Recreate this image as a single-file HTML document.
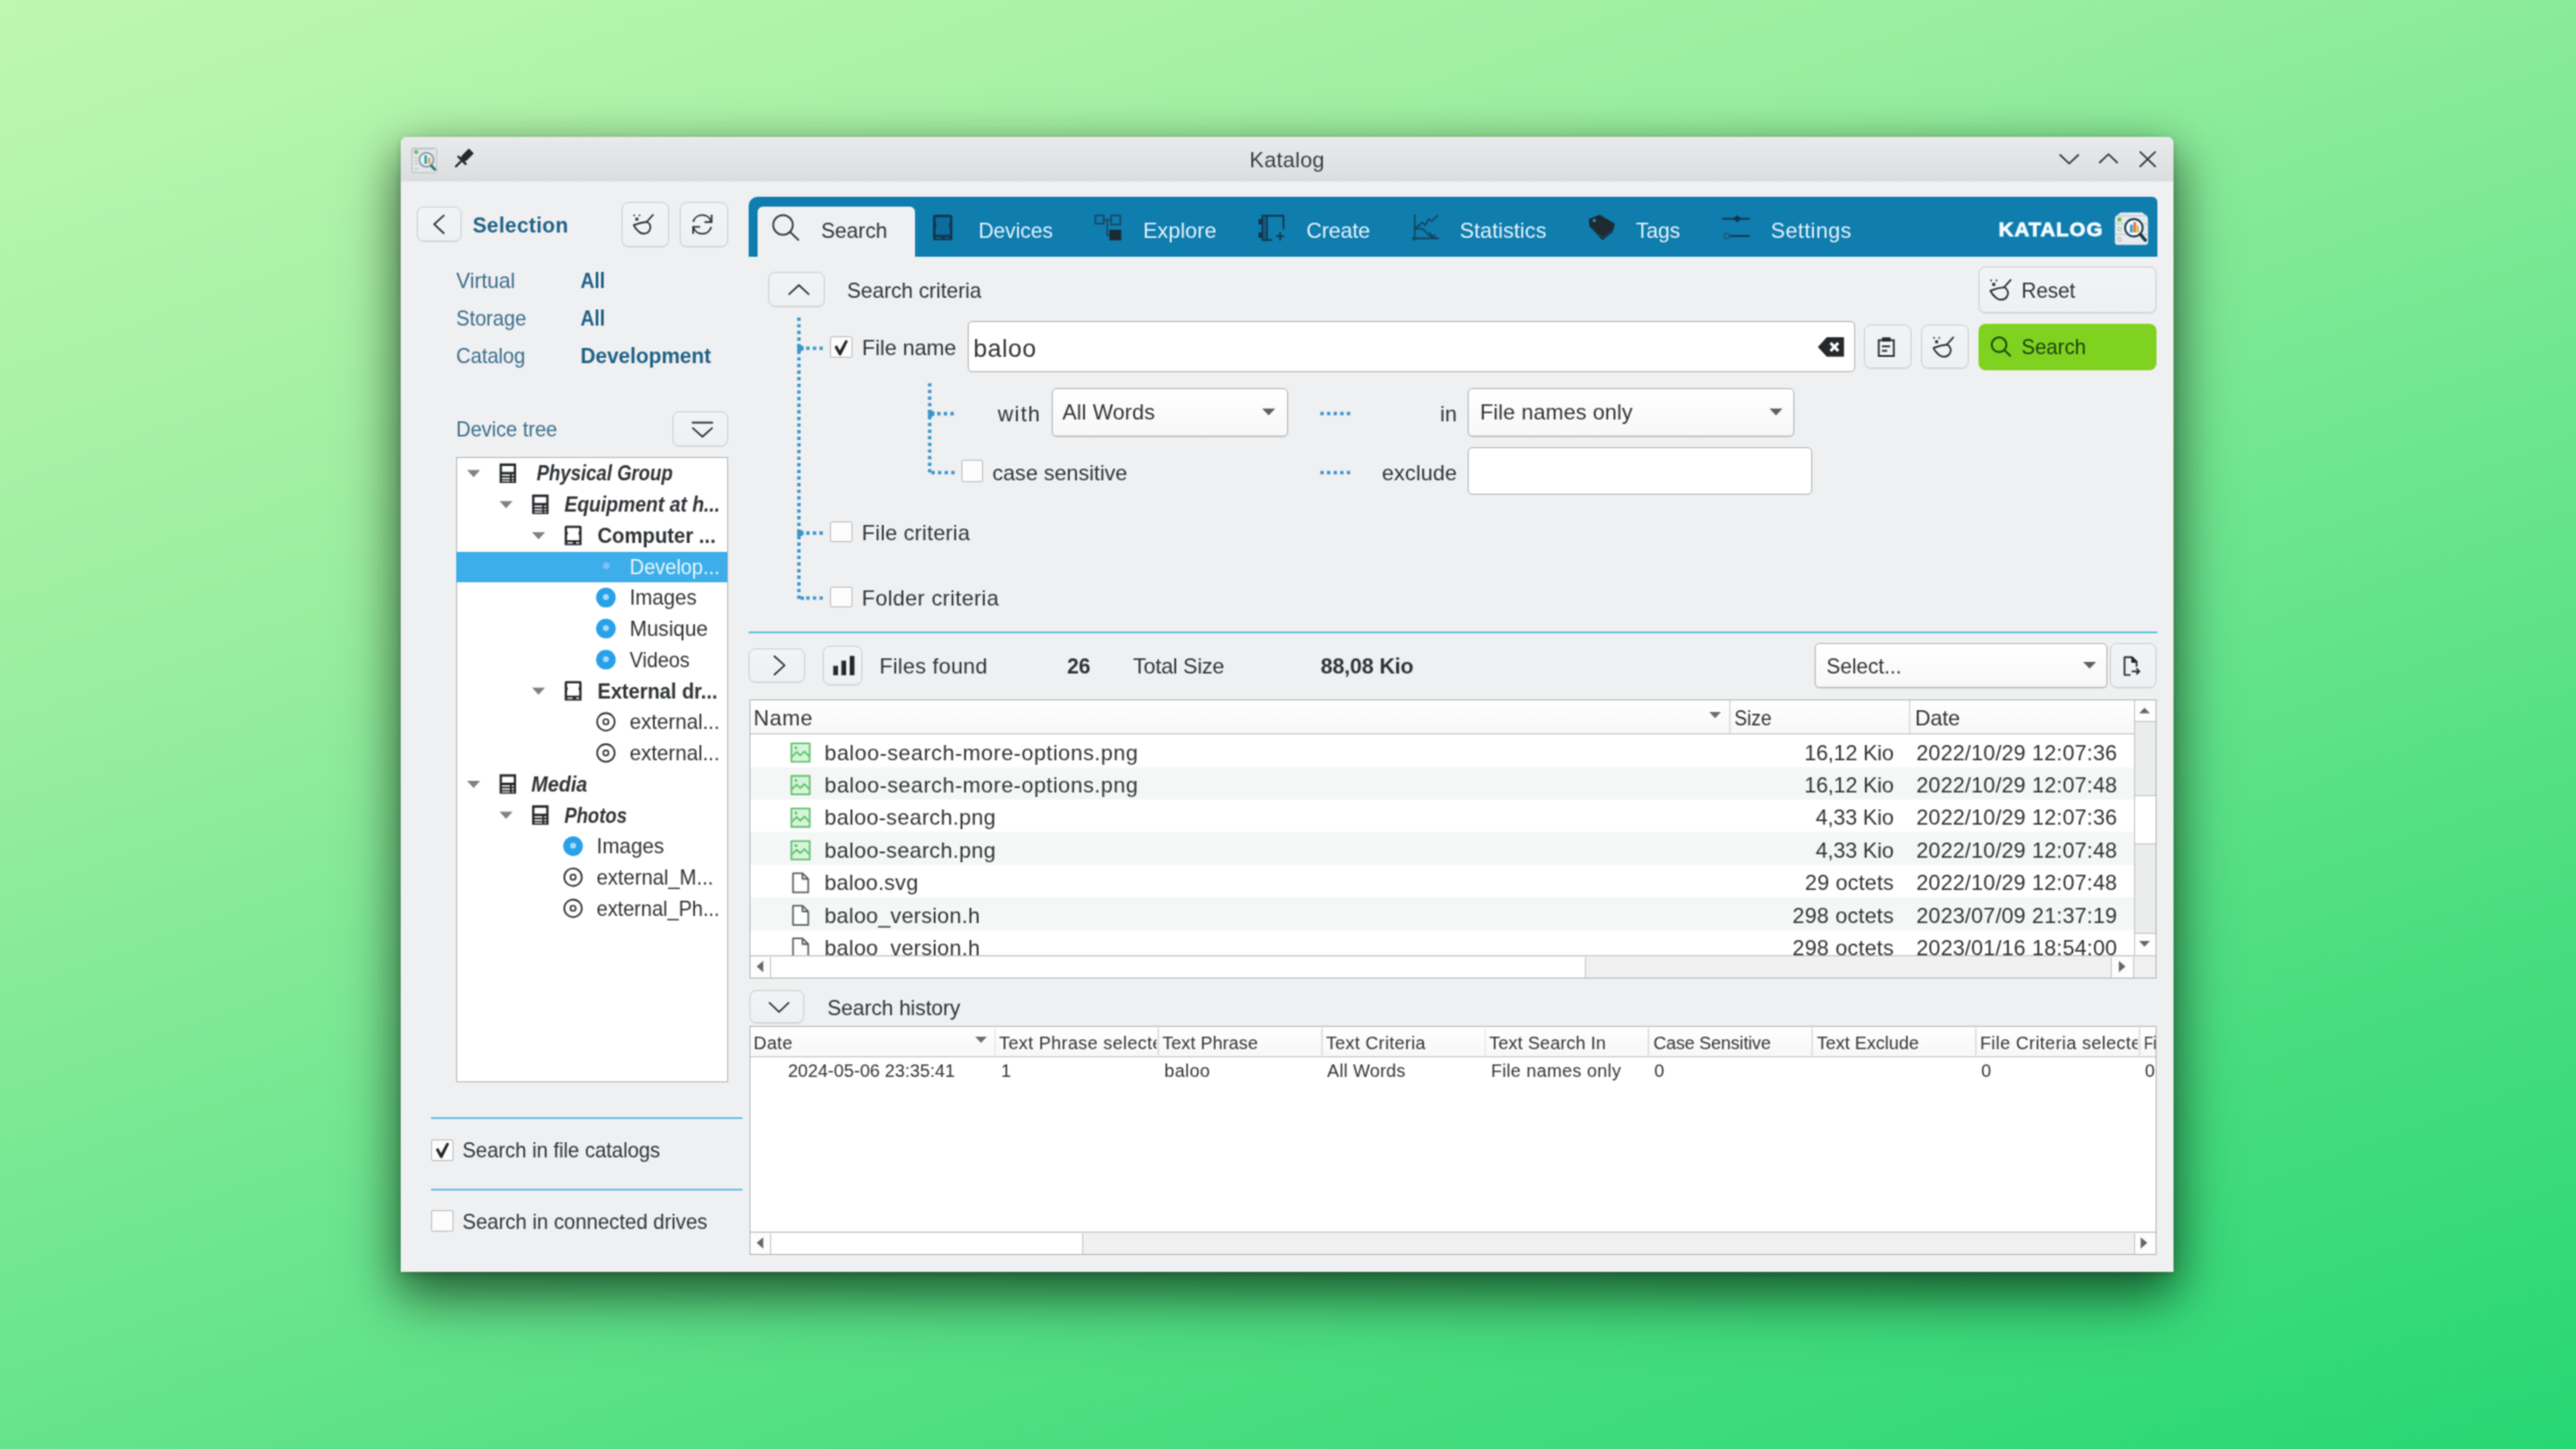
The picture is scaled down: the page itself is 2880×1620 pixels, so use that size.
<!DOCTYPE html>
<html><head><meta charset="utf-8"><title>Katalog</title><style>
html,body{margin:0;padding:0;}
body{width:2880px;height:1620px;overflow:hidden;position:relative;font-family:"Liberation Sans", sans-serif;
background:#74e793;}
.a{position:absolute;box-sizing:border-box;}
.t{position:absolute;white-space:nowrap;line-height:30px;height:30px;}
.btn{border:1.6px solid #c8cacc;border-radius:7.5px;background:linear-gradient(#f2f3f4,#eff0f1);box-shadow:0 1px 1.5px rgba(0,0,0,.06);}
.edit{border:1.7px solid #a9abad;border-radius:5px;background:#fff;}
.combo{border:1.7px solid #acaeb0;border-radius:5px;background:linear-gradient(#ffffff,#f7f7f8);box-shadow:0 1px 1.5px rgba(0,0,0,.10);}
.cb{border:1.6px solid #b4b6b8;border-radius:2px;background:#fcfcfc;}
</style></head><body>
<div class="a" style="left:0;top:0;width:2880px;height:1620px;background:linear-gradient(160deg,#bff7b1 0%,#9aee9f 30%,#6fe690 55%,#45dc7e 80%,#27d773 100%);"></div><svg width="0" height="0" style="position:absolute;left:0;top:0"><filter id="soft" x="0" y="0" width="100%" height="100%" color-interpolation-filters="sRGB"><feConvolveMatrix order="3" kernelMatrix="0.05090 0.12381 0.05090 0.12381 0.30116 0.12381 0.05090 0.12381 0.05090" edgeMode="duplicate" preserveAlpha="false"/></filter></svg><div class="a" style="left:0;top:0;width:2880px;height:1620px;filter:url(#soft);"><div class="a " style="left:448.0px;top:153.0px;width:1982.0px;height:1268.6px;background:#eff0f1;border-radius:7px 7px 0 0;box-shadow:0 20px 48px 2px rgba(0,24,8,.52),0 30px 80px 0 rgba(0,24,8,.30),0 3px 10px rgba(0,20,8,.18);"></div><div class="a " style="left:448.0px;top:153.0px;width:1982.0px;height:50.0px;background:linear-gradient(#e9eaeb,#dcddde);border-radius:7px 7px 0 0;"></div><span id="t0" class="t" style="font-size:24px;color:#3a3d40;top:164.28px;letter-spacing:0.366px;left:1397.10px;">Katalog</span><div class="a btn" style="left:465.9px;top:231.4px;width:50.0px;height:38.4px;"></div><span id="t1" class="t" style="font-size:23.3px;color:#1f6186;top:237.27px;font-weight:bold;letter-spacing:0.403px;left:528.40px;">Selection</span><div class="a btn" style="left:694.9px;top:225.7px;width:52.8px;height:50.0px;"></div><div class="a btn" style="left:760.1px;top:225.7px;width:53.6px;height:50.0px;"></div><span id="t2" class="t" style="font-size:24px;color:#3b6e8c;top:298.58px;left:509.80px;transform:scaleX(0.9749);transform-origin:left center;">Virtual</span><span id="t3" class="t" style="font-size:24px;color:#1f6186;top:298.58px;font-weight:bold;left:648.50px;transform:scaleX(0.8966);transform-origin:left center;">All</span><span id="t4" class="t" style="font-size:24px;color:#3b6e8c;top:340.88px;left:509.80px;transform:scaleX(0.9326);transform-origin:left center;">Storage</span><span id="t5" class="t" style="font-size:24px;color:#1f6186;top:340.88px;font-weight:bold;left:648.50px;transform:scaleX(0.8966);transform-origin:left center;">All</span><span id="t6" class="t" style="font-size:24px;color:#3b6e8c;top:383.28px;left:509.80px;transform:scaleX(0.9343);transform-origin:left center;">Catalog</span><span id="t7" class="t" style="font-size:24px;color:#1f6186;top:383.28px;font-weight:bold;left:648.80px;transform:scaleX(0.9681);transform-origin:left center;">Development</span><span id="t8" class="t" style="font-size:24px;color:#3b6e8c;top:465.28px;left:509.80px;transform:scaleX(0.9309);transform-origin:left center;">Device tree</span><div class="a btn" style="left:752.2px;top:460.4px;width:61.8px;height:38.2px;"></div><div class="a " style="left:509.5px;top:510.6px;width:304.1px;height:699.3px;background:#fff;border:1.6px solid #adafb1;"></div><div class="a " style="left:510.3px;top:616.6px;width:302.5px;height:34.2px;background:#3daee9;"></div><span id="t9" class="t" style="font-size:24px;color:#303336;top:514.38px;font-weight:bold;font-style:italic;left:599.60px;transform:scaleX(0.8639);transform-origin:left center;">Physical Group</span><span id="t10" class="t" style="font-size:24px;color:#303336;top:549.12px;font-weight:bold;font-style:italic;left:630.90px;transform:scaleX(0.9005);transform-origin:left center;">Equipment at h...</span><span id="t11" class="t" style="font-size:24px;color:#303336;top:583.86px;font-weight:bold;left:667.80px;transform:scaleX(0.9442);transform-origin:left center;">Computer ...</span><span id="t12" class="t" style="font-size:24px;color:#e9f7fe;top:618.60px;left:703.60px;transform:scaleX(0.9309);transform-origin:left center;">Develop...</span><span id="t13" class="t" style="font-size:24px;color:#303336;top:653.34px;left:703.60px;transform:scaleX(0.9517);transform-origin:left center;">Images</span><span id="t14" class="t" style="font-size:24px;color:#303336;top:688.08px;left:703.60px;transform:scaleX(0.9634);transform-origin:left center;">Musique</span><span id="t15" class="t" style="font-size:24px;color:#303336;top:722.82px;left:703.60px;transform:scaleX(0.9198);transform-origin:left center;">Videos</span><span id="t16" class="t" style="font-size:24px;color:#303336;top:757.56px;font-weight:bold;left:667.80px;transform:scaleX(0.9315);transform-origin:left center;">External dr...</span><span id="t17" class="t" style="font-size:24px;color:#303336;top:792.30px;left:703.60px;transform:scaleX(0.9545);transform-origin:left center;">external...</span><span id="t18" class="t" style="font-size:24px;color:#303336;top:827.04px;left:703.60px;transform:scaleX(0.9545);transform-origin:left center;">external...</span><span id="t19" class="t" style="font-size:24px;color:#303336;top:861.78px;font-weight:bold;font-style:italic;left:594.00px;transform:scaleX(0.9204);transform-origin:left center;">Media</span><span id="t20" class="t" style="font-size:24px;color:#303336;top:896.52px;font-weight:bold;font-style:italic;left:630.90px;transform:scaleX(0.8595);transform-origin:left center;">Photos</span><span id="t21" class="t" style="font-size:24px;color:#303336;top:931.26px;left:666.70px;transform:scaleX(0.9593);transform-origin:left center;">Images</span><span id="t22" class="t" style="font-size:24px;color:#303336;top:966.00px;left:666.70px;transform:scaleX(0.9406);transform-origin:left center;">external_M...</span><span id="t23" class="t" style="font-size:24px;color:#303336;top:1000.74px;left:666.70px;transform:scaleX(0.9285);transform-origin:left center;">external_Ph...</span><div class="a " style="left:481.7px;top:1248.8px;width:348.8px;height:1.8px;background:#5fbde3;"></div><div class="a cb" style="left:482.3px;top:1273.6px;width:24.4px;height:24.0px;"></div><span id="t24" class="t" style="font-size:24px;color:#303336;top:1270.78px;left:517.20px;transform:scaleX(0.9417);transform-origin:left center;">Search in file catalogs</span><div class="a " style="left:481.7px;top:1328.8px;width:348.8px;height:1.8px;background:#5fbde3;"></div><div class="a cb" style="left:482.3px;top:1353.4px;width:24.4px;height:24.0px;"></div><span id="t25" class="t" style="font-size:24px;color:#303336;top:1350.68px;left:517.20px;transform:scaleX(0.9461);transform-origin:left center;">Search in connected drives</span><div class="a " style="left:836.5px;top:219.5px;width:1575.7px;height:67.5px;background:#0f7dae;border-radius:10px 6px 0 0;"></div><div class="a " style="left:836.5px;top:286.8px;width:1575.7px;height:2.2px;background:#e2f3f9;"></div><div class="a " style="left:847.0px;top:230.5px;width:175.9px;height:58.5px;background:#eff0f1;border-radius:6px 6px 0 0;"></div><span id="t26" class="t" style="font-size:24px;color:#303336;top:242.58px;left:917.70px;transform:scaleX(0.9744);transform-origin:left center;">Search</span><span id="t27" class="t" style="font-size:24px;color:#e4f3fb;top:242.58px;left:1093.80px;transform:scaleX(0.9735);transform-origin:left center;">Devices</span><span id="t28" class="t" style="font-size:24px;color:#e4f3fb;top:242.58px;letter-spacing:0.104px;left:1278.00px;">Explore</span><span id="t29" class="t" style="font-size:24px;color:#e4f3fb;top:242.58px;letter-spacing:-0.149px;left:1460.50px;">Create</span><span id="t30" class="t" style="font-size:24px;color:#e4f3fb;top:242.58px;letter-spacing:0.108px;left:1631.90px;">Statistics</span><span id="t31" class="t" style="font-size:24px;color:#e4f3fb;top:242.58px;left:1829.40px;transform:scaleX(0.9763);transform-origin:left center;">Tags</span><span id="t32" class="t" style="font-size:24px;color:#e4f3fb;top:242.58px;letter-spacing:0.469px;left:1979.80px;">Settings</span><span id="t33" class="t" style="font-size:22.8px;color:#f4fbff;top:241.06px;font-weight:bold;letter-spacing:1.079px;left:2234.60px;-webkit-text-stroke:0.9px #f4fbff;">KATALOG</span><div class="a btn" style="left:859.3px;top:304.2px;width:62.3px;height:39.2px;"></div><span id="t34" class="t" style="font-size:24px;color:#303336;top:310.18px;left:946.80px;transform:scaleX(0.9700);transform-origin:left center;">Search criteria</span><div class="a btn" style="left:2211.8px;top:297.9px;width:199.5px;height:52.3px;"></div><span id="t35" class="t" style="font-size:24px;color:#303336;top:310.28px;left:2259.80px;transform:scaleX(0.9601);transform-origin:left center;">Reset</span><div class="a cb" style="left:928.2px;top:376.0px;width:24.5px;height:24.4px;"></div><span id="t36" class="t" style="font-size:24px;color:#303336;top:374.08px;letter-spacing:0.003px;left:963.80px;">File name</span><div class="a edit" style="left:1081.6px;top:358.6px;width:992.2px;height:57.6px;"></div><span id="t37" class="t" style="font-size:27.5px;color:#303336;top:374.82px;letter-spacing:0.726px;left:1088.20px;">baloo</span><div class="a btn" style="left:2084.3px;top:362.7px;width:53.1px;height:49.8px;"></div><div class="a btn" style="left:2148.0px;top:362.7px;width:53.1px;height:49.8px;"></div><div class="a " style="left:2211.8px;top:361.6px;width:199.5px;height:52.0px;background:#7fd320;border-radius:8px;"></div><span id="t38" class="t" style="font-size:24px;color:#1c3f10;top:373.48px;left:2259.90px;transform:scaleX(0.9494);transform-origin:left center;">Search</span><span id="t39" class="t" style="font-size:24px;color:#303336;top:447.68px;letter-spacing:1.438px;left:1115.60px;">with</span><div class="a combo" style="left:1175.5px;top:434.0px;width:264.0px;height:53.8px;"></div><span id="t40" class="t" style="font-size:24px;color:#303336;top:446.28px;letter-spacing:0.156px;left:1187.70px;">All Words</span><span id="t41" class="t" style="font-size:24px;color:#303336;top:447.68px;letter-spacing:0.113px;left:1610.00px;">in</span><div class="a combo" style="left:1641.4px;top:434.0px;width:364.3px;height:53.8px;"></div><span id="t42" class="t" style="font-size:24px;color:#303336;top:446.28px;letter-spacing:0.166px;left:1654.80px;">File names only</span><div class="a cb" style="left:1074.5px;top:514.4px;width:24.6px;height:24.3px;"></div><span id="t43" class="t" style="font-size:24px;color:#303336;top:513.68px;letter-spacing:0.012px;left:1109.50px;">case sensitive</span><span id="t44" class="t" style="font-size:24px;color:#303336;top:514.28px;letter-spacing:0.178px;left:1545.00px;">exclude</span><div class="a edit" style="left:1641.4px;top:499.9px;width:384.4px;height:53.6px;"></div><div class="a cb" style="left:928.4px;top:582.6px;width:24.2px;height:23.8px;"></div><span id="t45" class="t" style="font-size:24px;color:#303336;top:581.28px;letter-spacing:0.278px;left:963.60px;">File criteria</span><div class="a cb" style="left:928.4px;top:655.6px;width:24.2px;height:23.7px;"></div><span id="t46" class="t" style="font-size:24px;color:#303336;top:653.98px;letter-spacing:0.442px;left:963.60px;">Folder criteria</span><div class="a " style="left:837.0px;top:705.9px;width:1575.2px;height:1.8px;background:#5fbde3;"></div><div class="a btn" style="left:837.3px;top:724.9px;width:62.3px;height:38.4px;"></div><div class="a btn" style="left:919.7px;top:721.7px;width:44.3px;height:44.6px;"></div><span id="t47" class="t" style="font-size:24px;color:#303336;top:729.78px;letter-spacing:0.329px;left:983.20px;">Files found</span><span id="t48" class="t" style="font-size:24px;color:#303336;top:729.78px;font-weight:bold;left:1192.80px;transform:scaleX(0.9812);transform-origin:left center;">26</span><span id="t49" class="t" style="font-size:24px;color:#303336;top:729.78px;letter-spacing:-0.218px;left:1266.80px;">Total Size</span><span id="t50" class="t" style="font-size:24px;color:#303336;top:729.78px;font-weight:bold;letter-spacing:-0.174px;left:1476.50px;">88,08 Kio</span><div class="a combo" style="left:2029.3px;top:719.3px;width:327.0px;height:49.5px;"></div><span id="t51" class="t" style="font-size:24px;color:#303336;top:729.78px;left:2041.80px;transform:scaleX(0.9675);transform-origin:left center;">Select...</span><div class="a btn" style="left:2359.0px;top:719.3px;width:51.8px;height:49.5px;"></div><div class="a " style="left:837.5px;top:781.7px;width:1573.8px;height:312.5px;background:#fff;border:1.6px solid #adafb1;"></div><div class="a " style="left:839.0px;top:857.6px;width:1546.6px;height:36.4px;background:#f5f6f6;"></div><div class="a " style="left:839.0px;top:930.4px;width:1546.6px;height:36.4px;background:#f5f6f6;"></div><div class="a " style="left:839.0px;top:1003.2px;width:1546.6px;height:36.4px;background:#f5f6f6;"></div><div class="a " style="left:839.0px;top:783.2px;width:1546.6px;height:38.0px;background:linear-gradient(#ffffff,#f7f7f8);border-bottom:1.9px solid #b9bbbd;"></div><div class="a " style="left:1933.4px;top:783.2px;width:1.5px;height:36.5px;background:#dfe0e1;"></div><div class="a " style="left:2134.4px;top:783.2px;width:1.5px;height:36.5px;background:#dfe0e1;"></div><span id="t52" class="t" style="font-size:24px;color:#303336;top:788.18px;letter-spacing:0.556px;left:842.60px;">Name</span><span id="t53" class="t" style="font-size:24px;color:#303336;top:788.18px;left:1939.30px;transform:scaleX(0.8910);transform-origin:left center;">Size</span><span id="t54" class="t" style="font-size:24px;color:#303336;top:788.18px;letter-spacing:-0.101px;left:2141.00px;">Date</span><div class="a" style="left:0;top:0;width:2880px;height:1068.2px;overflow:hidden;"><span id="t55" class="t" style="font-size:24px;color:#303336;top:826.58px;letter-spacing:0.603px;left:921.70px;">baloo-search-more-options.png</span><span id="t56" class="t" style="font-size:24px;color:#303336;top:826.58px;letter-spacing:-0.165px;right:762.87px;">16,12 Kio</span><span id="t57" class="t" style="font-size:24px;color:#303336;top:826.58px;letter-spacing:0.232px;left:2142.50px;">2022/10/29 12:07:36</span><span id="t58" class="t" style="font-size:24px;color:#303336;top:862.98px;letter-spacing:0.603px;left:921.70px;">baloo-search-more-options.png</span><span id="t59" class="t" style="font-size:24px;color:#303336;top:862.98px;letter-spacing:-0.165px;right:762.87px;">16,12 Kio</span><span id="t60" class="t" style="font-size:24px;color:#303336;top:862.98px;letter-spacing:0.232px;left:2142.50px;">2022/10/29 12:07:48</span><span id="t61" class="t" style="font-size:24px;color:#303336;top:899.38px;letter-spacing:0.395px;left:921.70px;">baloo-search.png</span><span id="t62" class="t" style="font-size:24px;color:#303336;top:899.38px;letter-spacing:-0.125px;right:762.83px;">4,33 Kio</span><span id="t63" class="t" style="font-size:24px;color:#303336;top:899.38px;letter-spacing:0.232px;left:2142.50px;">2022/10/29 12:07:36</span><span id="t64" class="t" style="font-size:24px;color:#303336;top:935.78px;letter-spacing:0.395px;left:921.70px;">baloo-search.png</span><span id="t65" class="t" style="font-size:24px;color:#303336;top:935.78px;letter-spacing:-0.125px;right:762.83px;">4,33 Kio</span><span id="t66" class="t" style="font-size:24px;color:#303336;top:935.78px;letter-spacing:0.232px;left:2142.50px;">2022/10/29 12:07:48</span><span id="t67" class="t" style="font-size:24px;color:#303336;top:972.18px;letter-spacing:0.256px;left:921.70px;">baloo.svg</span><span id="t68" class="t" style="font-size:24px;color:#303336;top:972.18px;letter-spacing:0.224px;right:762.48px;">29 octets</span><span id="t69" class="t" style="font-size:24px;color:#303336;top:972.18px;letter-spacing:0.232px;left:2142.50px;">2022/10/29 12:07:48</span><span id="t70" class="t" style="font-size:24px;color:#303336;top:1008.58px;letter-spacing:0.310px;left:921.70px;">baloo_version.h</span><span id="t71" class="t" style="font-size:24px;color:#303336;top:1008.58px;letter-spacing:0.272px;right:762.43px;">298 octets</span><span id="t72" class="t" style="font-size:24px;color:#303336;top:1008.58px;letter-spacing:0.232px;left:2142.50px;">2023/07/09 21:37:19</span><span id="t73" class="t" style="font-size:24px;color:#303336;top:1044.98px;letter-spacing:0.310px;left:921.70px;">baloo_version.h</span><span id="t74" class="t" style="font-size:24px;color:#303336;top:1044.98px;letter-spacing:0.272px;right:762.43px;">298 octets</span><span id="t75" class="t" style="font-size:24px;color:#303336;top:1044.98px;letter-spacing:0.232px;left:2142.50px;">2023/01/16 18:54:00</span><svg class="a" style="left:0;top:0;" width="2880" height="1620" viewBox="0 0 2880 1620"><g transform="translate(883.7,830.1)" fill="none" stroke="#5cbf6b" stroke-width="1.8" stroke-linejoin="round"><rect x="1" y="1" width="20.6" height="20.6" fill="#d6f4d9"/><polyline points="1.6,16 7,10.6 11,14.6 15.6,10 21,15.6"/><circle cx="6.2" cy="6" r="1.6" fill="#5cbf6b" stroke="none"/></g><g transform="translate(883.7,866.5)" fill="none" stroke="#5cbf6b" stroke-width="1.8" stroke-linejoin="round"><rect x="1" y="1" width="20.6" height="20.6" fill="#d6f4d9"/><polyline points="1.6,16 7,10.6 11,14.6 15.6,10 21,15.6"/><circle cx="6.2" cy="6" r="1.6" fill="#5cbf6b" stroke="none"/></g><g transform="translate(883.7,902.9)" fill="none" stroke="#5cbf6b" stroke-width="1.8" stroke-linejoin="round"><rect x="1" y="1" width="20.6" height="20.6" fill="#d6f4d9"/><polyline points="1.6,16 7,10.6 11,14.6 15.6,10 21,15.6"/><circle cx="6.2" cy="6" r="1.6" fill="#5cbf6b" stroke="none"/></g><g transform="translate(883.7,939.3)" fill="none" stroke="#5cbf6b" stroke-width="1.8" stroke-linejoin="round"><rect x="1" y="1" width="20.6" height="20.6" fill="#d6f4d9"/><polyline points="1.6,16 7,10.6 11,14.6 15.6,10 21,15.6"/><circle cx="6.2" cy="6" r="1.6" fill="#5cbf6b" stroke="none"/></g><g transform="translate(885.6,975.3)" fill="none" stroke="#55595c" stroke-width="1.8" stroke-linejoin="round"><path d="M1 1 H11.6 L18 7.4 V22.4 H1 Z" fill="#fff"/><path d="M11.6 1 V7.4 H18"/></g><g transform="translate(885.6,1011.7)" fill="none" stroke="#55595c" stroke-width="1.8" stroke-linejoin="round"><path d="M1 1 H11.6 L18 7.4 V22.4 H1 Z" fill="#fff"/><path d="M11.6 1 V7.4 H18"/></g><g transform="translate(885.6,1048.1)" fill="none" stroke="#55595c" stroke-width="1.8" stroke-linejoin="round"><path d="M1 1 H11.6 L18 7.4 V22.4 H1 Z" fill="#fff"/><path d="M11.6 1 V7.4 H18"/></g></svg></div><div class="a " style="left:2385.6px;top:783.2px;width:24.2px;height:285.0px;background:#ebecec;border-left:1.5px solid #bcbec0;"></div><div class="a " style="left:2385.6px;top:783.2px;width:24.2px;height:23.6px;background:#fdfdfd;border-left:1.5px solid #bcbec0;border-bottom:1.5px solid #bcbec0;"></div><div class="a " style="left:2385.6px;top:889.0px;width:24.2px;height:54.8px;background:#ffffff;border:1.5px solid #bcbec0;border-right:none;"></div><div class="a " style="left:2385.6px;top:1042.7px;width:24.2px;height:25.5px;background:#fdfdfd;border-left:1.5px solid #bcbec0;border-top:1.5px solid #bcbec0;"></div><div class="a " style="left:839.0px;top:1068.2px;width:1570.8px;height:24.5px;background:#f0f0f1;border-top:1.6px solid #b7b9bb;"></div><div class="a " style="left:839.0px;top:1069.7px;width:23.1px;height:23.0px;background:#fdfdfd;border-right:1.5px solid #bcbec0;"></div><div class="a " style="left:862.1px;top:1069.7px;width:911.0px;height:23.0px;background:#ffffff;border-right:1.5px solid #bcbec0;"></div><div class="a " style="left:2360.2px;top:1069.7px;width:25.4px;height:23.0px;background:#fdfdfd;border-left:1.5px solid #bcbec0;border-right:1.5px solid #bcbec0;"></div><div class="a btn" style="left:837.8px;top:1106.7px;width:61.5px;height:37.8px;"></div><span id="t76" class="t" style="font-size:24px;color:#303336;top:1112.18px;left:925.00px;transform:scaleX(0.9693);transform-origin:left center;">Search history</span><div class="a " style="left:837.5px;top:1147.3px;width:1573.8px;height:255.9px;background:#fff;border:1.6px solid #adafb1;"></div><div class="a " style="left:839.0px;top:1148.8px;width:1570.8px;height:33.2px;background:linear-gradient(#ffffff,#f7f7f8);border-bottom:1.9px solid #b9bbbd;"></div><div class="a " style="left:1111.7px;top:1148.8px;width:1.5px;height:31.7px;background:#dfe0e1;"></div><div class="a " style="left:1294.4px;top:1148.8px;width:1.5px;height:31.7px;background:#dfe0e1;"></div><div class="a " style="left:1477.0px;top:1148.8px;width:1.5px;height:31.7px;background:#dfe0e1;"></div><div class="a " style="left:1659.6px;top:1148.8px;width:1.5px;height:31.7px;background:#dfe0e1;"></div><div class="a " style="left:1842.4px;top:1148.8px;width:1.5px;height:31.7px;background:#dfe0e1;"></div><div class="a " style="left:2025.4px;top:1148.8px;width:1.5px;height:31.7px;background:#dfe0e1;"></div><div class="a " style="left:2208.2px;top:1148.8px;width:1.5px;height:31.7px;background:#dfe0e1;"></div><div class="a " style="left:2391.2px;top:1148.8px;width:1.5px;height:31.7px;background:#dfe0e1;"></div><span id="t77" class="t" style="font-size:20px;color:#303336;top:1151.33px;letter-spacing:0.350px;left:842.60px;">Date</span><div class="a" style="left:1113.2px;top:0;width:179.8px;height:1620px;overflow:hidden;"><span id="t78" class="t" style="font-size:20px;color:#303336;top:1151.33px;left:3.80px;letter-spacing:0.45px;">Text Phrase selected</span></div><span id="t79" class="t" style="font-size:20px;color:#303336;top:1151.33px;letter-spacing:0.119px;left:1299.50px;">Text Phrase</span><span id="t80" class="t" style="font-size:20px;color:#303336;top:1151.33px;letter-spacing:0.383px;left:1482.40px;">Text Criteria</span><span id="t81" class="t" style="font-size:20px;color:#303336;top:1151.33px;letter-spacing:0.204px;left:1665.00px;">Text Search In</span><span id="t82" class="t" style="font-size:20px;color:#303336;top:1151.33px;letter-spacing:-0.154px;left:1848.40px;">Case Sensitive</span><span id="t83" class="t" style="font-size:20px;color:#303336;top:1151.33px;letter-spacing:0.064px;left:2031.20px;">Text Exclude</span><div class="a" style="left:2209.7px;top:0;width:180.3px;height:1620px;overflow:hidden;"><span id="t84" class="t" style="font-size:20px;color:#303336;top:1151.33px;left:4.00px;letter-spacing:0.45px;">File Criteria selected</span></div><div class="a" style="left:2392.7px;top:0;width:17.1px;height:1620px;overflow:hidden;"><span id="t85" class="t" style="font-size:20px;color:#303336;top:1151.33px;left:4.10px;transform:scaleX(0.84);transform-origin:left center;">File</span></div><span id="t86" class="t" style="font-size:20px;color:#303336;top:1182.43px;letter-spacing:0.055px;left:880.90px;">2024-05-06 23:35:41</span><span id="t87" class="t" style="font-size:20px;color:#303336;top:1182.43px;left:1119.30px;">1</span><span id="t88" class="t" style="font-size:20px;color:#303336;top:1182.43px;letter-spacing:0.466px;left:1301.80px;">baloo</span><span id="t89" class="t" style="font-size:20px;color:#303336;top:1182.43px;letter-spacing:0.285px;left:1483.80px;">All Words</span><span id="t90" class="t" style="font-size:20px;color:#303336;top:1182.43px;letter-spacing:0.374px;left:1666.90px;">File names only</span><span id="t91" class="t" style="font-size:20px;color:#303336;top:1182.43px;left:1849.40px;">0</span><span id="t92" class="t" style="font-size:20px;color:#303336;top:1182.43px;left:2215.00px;">0</span><div class="a" style="left:2392.7px;top:0;width:16.9px;height:1620px;overflow:hidden;"><span id="t93" class="t" style="font-size:20px;color:#303336;top:1182.43px;left:5.30px;">0</span></div><div class="a " style="left:839.0px;top:1377.0px;width:1570.8px;height:24.7px;background:#f0f0f1;border-top:1.6px solid #b7b9bb;"></div><div class="a " style="left:839.0px;top:1378.5px;width:23.1px;height:23.2px;background:#fdfdfd;border-right:1.5px solid #bcbec0;"></div><div class="a " style="left:862.1px;top:1378.5px;width:349.4px;height:23.2px;background:#ffffff;border-right:1.5px solid #bcbec0;"></div><div class="a " style="left:2386.2px;top:1378.5px;width:23.6px;height:23.2px;background:#fdfdfd;border-left:1.5px solid #bcbec0;"></div><svg class="a" style="left:0;top:0;" width="2880" height="1620" viewBox="0 0 2880 1620"><polyline points="2303.3,173.2 2313.4,182.9 2323.5,173.2" fill="none" stroke="#33363a" stroke-width="1.9" stroke-linecap="round" stroke-linejoin="round" /><polyline points="2347.5,181.7 2357.3,172.4 2367.1,181.7" fill="none" stroke="#33363a" stroke-width="1.9" stroke-linecap="round" stroke-linejoin="round" /><polyline points="2392.8,169.9 2409.5,186.0" fill="none" stroke="#33363a" stroke-width="1.9" stroke-linecap="round" stroke-linejoin="round" /><polyline points="2409.5,169.9 2392.8,186.0" fill="none" stroke="#33363a" stroke-width="1.9" stroke-linecap="round" stroke-linejoin="round" /><g transform="translate(516.4,179.35) rotate(45)" fill="#26282b"><path d="M-3.9 -14.9 H3.9 V-4.4 L2.9 -1 H-2.9 L-3.9 -4.4 Z"/><rect x="-6.9" y="-1.5" width="13.8" height="2.6" rx="1.2"/><rect x="-1.15" y="0.5" width="2.3" height="10" rx="1"/></g><g transform="translate(460,165.2)"><rect x="0.5" y="0.5" width="27.7" height="27.3" rx="1.5" fill="#e3e6e8" stroke="#b7bbbf" stroke-width="1"/><rect x="3.1" y="2.7" width="4.4" height="4.1" rx="0.8" fill="#6fbf58"/><g stroke="#c3c9cd" stroke-width="1.3"><line x1="3" y1="11.4" x2="7.5" y2="11.4"/><line x1="3" y1="14.6" x2="7" y2="14.6"/><line x1="3" y1="18" x2="7.5" y2="18"/><line x1="3" y1="23.4" x2="8" y2="23.4"/><line x1="1" y1="1.6" x2="25" y2="1.6"/></g><circle cx="16.8" cy="13.4" r="7.9" fill="#e6f6f7" stroke="#8b9ca6" stroke-width="2"/><rect x="14.5" y="8.4" width="2.8" height="9.6" fill="#3c9b9b"/><rect x="18.6" y="11.0" width="2.8" height="7.0" fill="#d9a468"/><line x1="22.4" y1="20.2" x2="26.2" y2="24.2" stroke="#2b726e" stroke-width="2.9" stroke-linecap="round"/></g><polyline points="496.2,240.9 485.4,250.8 496.2,260.7" fill="none" stroke="#2a2d30" stroke-width="1.85" stroke-linecap="round" stroke-linejoin="round" /><g transform="translate(721.5,251.2) scale(1.0)" fill="none" stroke="#2a2d30" stroke-width="1.85" stroke-linecap="round" stroke-linejoin="round"><path d="M-13 0.5 Q-5 -2.6 1.6 -3.2 C5.6 -1.6 7 3.4 4.4 7 C2 10.6 -3.4 11 -7 8 C-9.6 5.8 -12 3 -13 0.5 Z"/><line x1="1.6" y1="-3.2" x2="8.4" y2="-10.9"/><rect x="-11.1" y="-7.8" width="3.2" height="3.2" fill="#2a2d30" stroke="none"/><rect x="-13.2" y="-11.3" width="1.7" height="1.7" fill="#2a2d30" stroke="none"/><rect x="-7.4" y="-11.3" width="1.7" height="1.7" fill="#2a2d30" stroke="none"/></g><g transform="translate(785.1,250.9)" fill="none" stroke="#2a2d30" stroke-width="1.85" stroke-linejoin="miter"><path d="M-10.1 -2.9 A10.5 10.5 0 0 1 9.9 -3.4"/><polyline points="10.5,-10.8 10.5,-2.6 2.6,-2.6"/><path d="M10.1 2.9 A10.5 10.5 0 0 1 -9.9 3.4"/><polyline points="-10.2,10.7 -10.2,2.8 -2.3,2.8"/></g><polyline points="774.2,472.5 796.4,472.5" fill="none" stroke="#2a2d30" stroke-width="1.85" stroke-linecap="round" stroke-linejoin="round" /><polyline points="774.6,478.6 785.3,488.2 796.1,478.6" fill="none" stroke="#2a2d30" stroke-width="1.85" stroke-linecap="round" stroke-linejoin="round" /><polygon points="522.2,525.5 536.8,525.5 529.5,533.5" fill="#7f8285"/><g transform="translate(558.6,518.2)"><rect x="0" y="0" width="18.4" height="21.8" fill="#26292c"/><g fill="#fff"><rect x="2.6" y="2.8" width="13.2" height="6.6"/><rect x="2.6" y="12.3" width="8.8" height="1.6"/><rect x="13.6" y="12.3" width="2.3" height="1.6"/><rect x="2.6" y="15.8" width="8.8" height="1.6"/><rect x="13.6" y="15.8" width="2.3" height="1.6"/><rect x="2.6" y="19.0" width="8.8" height="1.2"/><rect x="13.6" y="19.0" width="2.3" height="1.2"/></g></g><polygon points="558.5,560.2 573.1,560.2 565.8,568.2" fill="#7f8285"/><g transform="translate(594.9,552.9)"><rect x="0" y="0" width="18.4" height="21.8" fill="#26292c"/><g fill="#fff"><rect x="2.6" y="2.8" width="13.2" height="6.6"/><rect x="2.6" y="12.3" width="8.8" height="1.6"/><rect x="13.6" y="12.3" width="2.3" height="1.6"/><rect x="2.6" y="15.8" width="8.8" height="1.6"/><rect x="13.6" y="15.8" width="2.3" height="1.6"/><rect x="2.6" y="19.0" width="8.8" height="1.2"/><rect x="13.6" y="19.0" width="2.3" height="1.2"/></g></g><polygon points="594.8,595.0 609.4,595.0 602.1,603.0" fill="#7f8285"/><g transform="translate(631.4,587.7)"><path d="M0 1.6 Q0 0 1.6 0 H17.2 Q18.8 0 18.8 1.6 V21.8 H0 Z" fill="#26292c"/><path d="M2.6 2.6 H16.2 V6.4 Q14.6 8.6 16.2 10.8 V16.4 H2.6 V10.8 Q4.2 8.6 2.6 6.4 Z" fill="#fff"/><rect x="3.0" y="18.4" width="6" height="1.5" fill="#fff"/><rect x="12.6" y="18.4" width="3.6" height="1.5" fill="#fff"/></g><circle cx="677.8" cy="632.5" r="3.8" fill="#7fc0fb"/><circle cx="677.4" cy="668.1" r="11" fill="#29a1e8"/><circle cx="677.4" cy="667.6" r="3.3" fill="#a9dafa"/><circle cx="677.4" cy="702.8" r="11" fill="#29a1e8"/><circle cx="677.4" cy="702.3" r="3.3" fill="#a9dafa"/><circle cx="677.4" cy="737.5" r="11" fill="#29a1e8"/><circle cx="677.4" cy="737.0" r="3.3" fill="#a9dafa"/><polygon points="594.8,768.7 609.4,768.7 602.1,776.7" fill="#7f8285"/><g transform="translate(631.4,761.4)"><path d="M0 1.6 Q0 0 1.6 0 H17.2 Q18.8 0 18.8 1.6 V21.8 H0 Z" fill="#26292c"/><path d="M2.6 2.6 H16.2 V6.4 Q14.6 8.6 16.2 10.8 V16.4 H2.6 V10.8 Q4.2 8.6 2.6 6.4 Z" fill="#fff"/><rect x="3.0" y="18.4" width="6" height="1.5" fill="#fff"/><rect x="12.6" y="18.4" width="3.6" height="1.5" fill="#fff"/></g><circle cx="677.4" cy="807.0" r="9.8" fill="none" stroke="#2d3033" stroke-width="1.85"/><circle cx="677.4" cy="807.0" r="3" fill="none" stroke="#2d3033" stroke-width="1.7"/><circle cx="677.4" cy="841.8" r="9.8" fill="none" stroke="#2d3033" stroke-width="1.85"/><circle cx="677.4" cy="841.8" r="3" fill="none" stroke="#2d3033" stroke-width="1.7"/><polygon points="522.2,872.9 536.8,872.9 529.5,880.9" fill="#7f8285"/><g transform="translate(558.6,865.6)"><rect x="0" y="0" width="18.4" height="21.8" fill="#26292c"/><g fill="#fff"><rect x="2.6" y="2.8" width="13.2" height="6.6"/><rect x="2.6" y="12.3" width="8.8" height="1.6"/><rect x="13.6" y="12.3" width="2.3" height="1.6"/><rect x="2.6" y="15.8" width="8.8" height="1.6"/><rect x="13.6" y="15.8" width="2.3" height="1.6"/><rect x="2.6" y="19.0" width="8.8" height="1.2"/><rect x="13.6" y="19.0" width="2.3" height="1.2"/></g></g><polygon points="558.5,907.6 573.1,907.6 565.8,915.6" fill="#7f8285"/><g transform="translate(594.9,900.3)"><rect x="0" y="0" width="18.4" height="21.8" fill="#26292c"/><g fill="#fff"><rect x="2.6" y="2.8" width="13.2" height="6.6"/><rect x="2.6" y="12.3" width="8.8" height="1.6"/><rect x="13.6" y="12.3" width="2.3" height="1.6"/><rect x="2.6" y="15.8" width="8.8" height="1.6"/><rect x="13.6" y="15.8" width="2.3" height="1.6"/><rect x="2.6" y="19.0" width="8.8" height="1.2"/><rect x="13.6" y="19.0" width="2.3" height="1.2"/></g></g><circle cx="640.7" cy="946.0" r="11" fill="#29a1e8"/><circle cx="640.7" cy="945.5" r="3.3" fill="#a9dafa"/><circle cx="640.7" cy="980.7" r="9.8" fill="none" stroke="#2d3033" stroke-width="1.85"/><circle cx="640.7" cy="980.7" r="3" fill="none" stroke="#2d3033" stroke-width="1.7"/><circle cx="640.7" cy="1015.5" r="9.8" fill="none" stroke="#2d3033" stroke-width="1.85"/><circle cx="640.7" cy="1015.5" r="3" fill="none" stroke="#2d3033" stroke-width="1.7"/><polygon points="933.4,387.9 935.5,386.3 938.9,392.5 945.5,380.4 947.6,381.4 939.9,397.2 938.3,396.9" fill="#1f2123" stroke="#1f2123" stroke-width="0.6" stroke-linejoin="round"/><polygon points="487.6,1285.3 489.7,1283.7 493.1,1289.9 499.7,1277.8 501.8,1278.8 494.1,1294.6 492.5,1294.3" fill="#1f2123" stroke="#1f2123" stroke-width="0.6" stroke-linejoin="round"/><circle cx="875.4" cy="251.5" r="11.0" fill="none" stroke="#34373a" stroke-width="1.9"/><line x1="883.3" y1="259.2" x2="892.6" y2="268.2" stroke="#34373a" stroke-width="1.9" stroke-linecap="round"/><g transform="translate(1043.1,239.9)"><path d="M0 3 Q0 0 3 0 H18.7 Q21.7 0 21.7 3 V28.7 H0 Z" fill="#12364d"/><path d="M2.8 2.8 H18.9 V8 Q17.2 11.5 18.9 15 V22.6 H2.8 V15 Q4.5 11.5 2.8 8 Z" fill="#0c6c9c"/><rect x="3.6" y="25.2" width="5.6" height="1.5" fill="#0c6c9c"/><rect x="13.4" y="25.2" width="4.6" height="1.5" fill="#0c6c9c"/></g><g transform="translate(1223.7,239.9)" fill="none" stroke="#174a66" stroke-width="1.9"><rect x="1" y="1" width="9.2" height="9.2"/><rect x="18.6" y="1" width="10.2" height="10.2"/><rect x="16.6" y="17" width="13.2" height="11.7" fill="#1b2933" stroke="none"/><polyline points="10.2,5.8 18.6,5.8"/><polyline points="14.2,5.8 14.2,23.2 16.6,23.2"/></g><g transform="translate(1406.9,240.3)" fill="none" stroke="#12364d" stroke-width="1.9"><path d="M4.4 1 H28 V16"/><path d="M4.4 28 H15.4"/><rect x="4.4" y="1" width="5.2" height="27" fill="#185a7d" stroke-width="1.7"/><rect x="0" y="4.6" width="4.4" height="6" fill="#12364d" stroke="none"/><rect x="0" y="19.6" width="4.4" height="6" fill="#12364d" stroke="none"/><line x1="24.3" y1="19.4" x2="24.3" y2="28.2"/><line x1="19.9" y1="23.8" x2="28.7" y2="23.8"/></g><g transform="translate(1578.6,239.9)" fill="none" stroke="#154560" stroke-width="1.8" stroke-linejoin="round" stroke-linecap="round"><polyline points="3.1,0.6 3.1,28.4"/><polyline points="0.4,26.6 29.4,26.6"/><polyline points="3.6,15.6 11.5,8.8 14.8,11.8 18.6,5.0 21.8,7.4 28.4,1.4"/><path d="M3.6 16.4 Q11 13.4 15.6 19.6 T28.2 26"/><polyline points="19.6,20.2 22.6,24.6 25.4,22.8"/></g><g transform="translate(1775.8,239.9)"><path d="M0.4 5.2 L12.6 0.2 L29.6 10.2 L27.4 19.4 L15.8 28.6 L1.4 13.6 Z" fill="#1e2a31"/><path d="M2.2 14.2 L16.2 26.0 L27.8 17.2" fill="none" stroke="#0f7dae" stroke-width="0.9" opacity="0.55"/><circle cx="6.6" cy="6.6" r="1.8" fill="#3b8fb8"/></g><g transform="translate(1924.5,239.2)" stroke="#12364d" stroke-width="2" fill="#12364d"><line x1="1" y1="5.4" x2="31.6" y2="5.4"/><path d="M17.6 1.4 L22.4 5.4 L17.6 9.4 L12.8 5.4 Z" stroke="none"/><line x1="9.4" y1="24.6" x2="31.6" y2="24.6"/><circle cx="6.0" cy="24.8" r="3.0" fill="none" stroke="#1d5f83"/></g><g transform="translate(2363.9,236.7)"><path d="M0.6 8 Q0.6 5 3 4 L7 0.8 H31 L35.4 4 Q37.6 5 37.6 8 V34 Q37.6 37 34.6 37 H3.6 Q0.6 37 0.6 34 Z" fill="#e7ebee"/><g stroke="#c3cbd0" stroke-width="1.3"><line x1="0.6" y1="13.6" x2="37.6" y2="13.6"/><line x1="0.6" y1="25.4" x2="37.6" y2="25.4"/><line x1="2" y1="4.6" x2="36" y2="4.6"/></g><rect x="3.4" y="6.6" width="4.4" height="4.4" rx="1" fill="#6cc04a"/><circle cx="5.6" cy="19.4" r="2" fill="none" stroke="#9fd3b0" stroke-width="1.2"/><circle cx="5.6" cy="31" r="2" fill="none" stroke="#b9c2c7" stroke-width="1.2"/><circle cx="21.8" cy="17.9" r="9.8" fill="#f6fafc" stroke="#1f3f52" stroke-width="2.2"/><rect x="17.4" y="14.6" width="3.2" height="8.6" fill="#3a9bd3"/><rect x="21.2" y="11.6" width="3.2" height="11.6" fill="#e2803a"/><rect x="25.0" y="15.6" width="2.4" height="7.6" fill="#e0b23a"/><line x1="29.2" y1="25.4" x2="34.6" y2="32" stroke="#16384c" stroke-width="3.6" stroke-linecap="round"/></g><polyline points="882.3,328.9 893.2,318.7 904.1,328.9" fill="none" stroke="#2a2d30" stroke-width="1.85" stroke-linecap="round" stroke-linejoin="round" /><g transform="translate(2239.0,324.5) scale(1.05)" fill="none" stroke="#2a2d30" stroke-width="1.85" stroke-linecap="round" stroke-linejoin="round"><path d="M-13 0.5 Q-5 -2.6 1.6 -3.2 C5.6 -1.6 7 3.4 4.4 7 C2 10.6 -3.4 11 -7 8 C-9.6 5.8 -12 3 -13 0.5 Z"/><line x1="1.6" y1="-3.2" x2="8.4" y2="-10.9"/><rect x="-11.1" y="-7.8" width="3.2" height="3.2" fill="#2a2d30" stroke="none"/><rect x="-13.2" y="-11.3" width="1.7" height="1.7" fill="#2a2d30" stroke="none"/><rect x="-7.4" y="-11.3" width="1.7" height="1.7" fill="#2a2d30" stroke="none"/></g><g transform="translate(2175.0,388.5) scale(1.03)" fill="none" stroke="#2a2d30" stroke-width="1.85" stroke-linecap="round" stroke-linejoin="round"><path d="M-13 0.5 Q-5 -2.6 1.6 -3.2 C5.6 -1.6 7 3.4 4.4 7 C2 10.6 -3.4 11 -7 8 C-9.6 5.8 -12 3 -13 0.5 Z"/><line x1="1.6" y1="-3.2" x2="8.4" y2="-10.9"/><rect x="-11.1" y="-7.8" width="3.2" height="3.2" fill="#2a2d30" stroke="none"/><rect x="-13.2" y="-11.3" width="1.7" height="1.7" fill="#2a2d30" stroke="none"/><rect x="-7.4" y="-11.3" width="1.7" height="1.7" fill="#2a2d30" stroke="none"/></g><circle cx="2235.0" cy="385.4" r="8.2" fill="none" stroke="#1c4a10" stroke-width="2.2"/><line x1="2240.8" y1="391.2" x2="2247.4" y2="397.8" stroke="#1c4a10" stroke-width="2.2" stroke-linecap="round"/><g transform="translate(2032.4,377.0)"><path d="M0 10.9 L10 0 H29.2 V21.8 H10 Z" fill="#26292c"/><path d="M14.2 6.4 L22.8 15.4 M22.8 6.4 L14.2 15.4" stroke="#fff" stroke-width="3.2" fill="none"/></g><g transform="translate(2099.5,377.0)" fill="none" stroke="#26292c" stroke-width="2"><rect x="1" y="3.4" width="16.8" height="17.6"/><rect x="4.6" y="0.2" width="9.6" height="4.6" fill="#26292c" stroke="none"/><line x1="4.6" y1="10.2" x2="13.6" y2="10.2"/><line x1="4.6" y1="15.2" x2="10.4" y2="15.2"/></g><line x1="893.2" y1="355.0" x2="893.2" y2="670.6" stroke="#3895cd" stroke-width="3.8" stroke-dasharray="3.7 3.7"/><line x1="901.4" y1="389.3" x2="921.4" y2="389.3" stroke="#3895cd" stroke-width="3.8" stroke-dasharray="3.7 3.7"/><polygon points="891.3,385.6 894.9,385.6 898.5,387.4 898.5,391.2 894.9,393.0 891.3,393.0" fill="#3895cd"/><line x1="901.4" y1="596.0" x2="921.4" y2="596.0" stroke="#3895cd" stroke-width="3.8" stroke-dasharray="3.7 3.7"/><polygon points="891.3,592.3 894.9,592.3 898.5,594.1 898.5,597.9 894.9,599.7 891.3,599.7" fill="#3895cd"/><line x1="901.4" y1="668.7" x2="921.4" y2="668.7" stroke="#3895cd" stroke-width="3.8" stroke-dasharray="3.7 3.7"/><line x1="895.1" y1="668.7" x2="901.4" y2="668.7" stroke="#3895cd" stroke-width="3.8" stroke-dasharray="3.7 3.7"/><line x1="1039.4" y1="428.4" x2="1039.4" y2="530.3" stroke="#3895cd" stroke-width="3.8" stroke-dasharray="3.7 3.7"/><line x1="1047.8" y1="462.5" x2="1067.8" y2="462.5" stroke="#3895cd" stroke-width="3.8" stroke-dasharray="3.7 3.7"/><polygon points="1037.5,458.8 1041.1,458.8 1044.7,460.6 1044.7,464.4 1041.1,466.2 1037.5,466.2" fill="#3895cd"/><line x1="1041.3" y1="528.4" x2="1067.8" y2="528.4" stroke="#3895cd" stroke-width="3.8" stroke-dasharray="3.7 3.7"/><line x1="1476.2" y1="462.4" x2="1510.0" y2="462.4" stroke="#3895cd" stroke-width="3.8" stroke-dasharray="3.7 3.7"/><line x1="1476.2" y1="528.4" x2="1510.0" y2="528.4" stroke="#3895cd" stroke-width="3.8" stroke-dasharray="3.7 3.7"/><polygon points="1411.1,456.8 1425.7,456.8 1418.4,464.4" fill="#5d6165"/><polygon points="1978.3,456.8 1992.9,456.8 1985.6,464.4" fill="#5d6165"/><polygon points="2328.9,740.0 2343.5,740.0 2336.2,747.6" fill="#5d6165"/><polyline points="865.8,733.7 877.2,743.9 865.8,754.2" fill="none" stroke="#2a2d30" stroke-width="1.85" stroke-linecap="round" stroke-linejoin="round" /><g fill="#26292b"><rect x="931.6" y="744.4" width="5.3" height="10.5"/><rect x="940.7" y="738.6" width="5.3" height="16.3"/><rect x="950.0" y="733.3" width="5.3" height="21.6"/></g><g transform="translate(2374.3,733.8)" fill="none" stroke="#26292b" stroke-width="1.9" stroke-linejoin="round"><path d="M14.4 11.6 V6.2 L9.4 1 H1 V20.8 H7.6"/><path d="M9.4 1 V6.2 H14.4 Z" fill="#26292b"/><line x1="9.0" y1="16.8" x2="17.4" y2="16.8"/><polyline points="14.2,13.6 17.6,16.8 14.2,20.0"/></g><polygon points="1911.0,795.9 1924.0,795.9 1917.5,803.1" fill="#6a6e71"/><polygon points="1090.3,1158.9 1103.3,1158.9 1096.8,1166.1" fill="#6a6e71"/><polygon points="2391.6,797.6 2403.6,797.6 2397.6,791.2" fill="#63676a"/><polygon points="2391.6,1052.0 2403.6,1052.0 2397.6,1058.4" fill="#63676a"/><polygon points="853.3,1074.3 853.3,1086.9 845.9,1080.6" fill="#63676a"/><polygon points="2368.9,1074.3 2368.9,1086.9 2376.3,1080.6" fill="#63676a"/><polygon points="853.3,1383.3 853.3,1395.9 845.9,1389.6" fill="#63676a"/><polygon points="2393.3,1383.3 2393.3,1395.9 2400.7,1389.6" fill="#63676a"/><polyline points="860.3,1121.2 871.0,1131.4 881.7,1121.2" fill="none" stroke="#2a2d30" stroke-width="1.85" stroke-linecap="round" stroke-linejoin="round" /></svg></div>
</body></html>
